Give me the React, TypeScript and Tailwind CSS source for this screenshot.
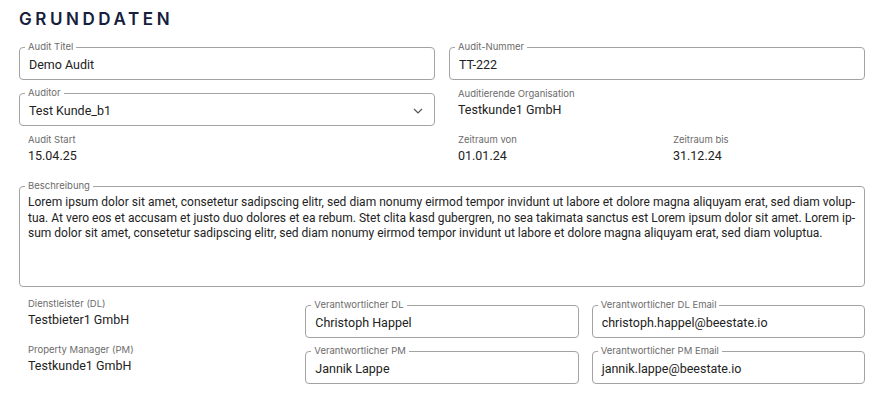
import React from "react";

const labelFont = "font-['Inter','Noto_Sans',sans-serif]";
const valueFont = "font-['Roboto','Liberation_Sans',sans-serif]";

function OutlinedField({ label, value, select }: { label: string; value: string; select?: boolean }) {
  return (
    <div className="relative h-[33px] rounded-[4px] border border-[#a3a3a3] flex items-center pl-[9px] pr-[10px] pt-[3px]">
      <span className={`absolute -top-[7px] left-[5px] bg-white px-[3px] text-[9.5px] leading-[12px] text-[#6b6b6b] ${labelFont}`}>
        {label}
      </span>
      <span className={`flex-1 text-[12.5px] text-[#222] ${valueFont}`}>{value}</span>
      {select && (
        <svg width="10" height="6" viewBox="0 0 10 6" className="mr-[1px]">
          <path d="M1 1l4 4 4-4" fill="none" stroke="#555" strokeWidth="1.2" />
        </svg>
      )}
    </div>
  );
}

function StaticField({ label, value, shift = "-mt-[6px]" }: { label: string; value: string; shift?: string }) {
  return (
    <div className={`pl-[9px] ${shift}`}>
      <div className={`text-[9.5px] leading-[12px] text-[#6b6b6b] ${labelFont}`}>{label}</div>
      <div className={`mt-[2px] text-[12.5px] leading-[16px] text-[#222] ${valueFont}`}>{value}</div>
    </div>
  );
}

export default function App() {
  return (
    <div className="w-[889px] h-[400px] bg-white pl-[19px] pr-[24px] pt-[8px]">
      <h1 className={`text-[17px] leading-[22px] font-semibold tracking-[0.21em] text-[#15203d] ${labelFont}`}>
        GRUNDDATEN
      </h1>

      <div className="mt-[17px] grid grid-cols-2 gap-x-[14px] gap-y-[13px]">
        <OutlinedField label="Audit Titel" value="Demo Audit" />
        <OutlinedField label="Audit-Nummer" value="TT-222" />
        <div className="h-[34px]">
          <OutlinedField label="Auditor" value="Test Kunde_b1" select />
        </div>
        <StaticField label="Auditierende Organisation" value="Testkunde1 GmbH" shift="-mt-[5px]" />
      </div>

      <div className="mt-[13px] grid grid-cols-2 gap-x-[14px]">
        <StaticField label="Audit Start" value="15.04.25" />
        <div className="grid grid-cols-2 gap-x-[14px]">
          <StaticField label="Zeitraum von" value="01.01.24" />
          <StaticField label="Zeitraum bis" value="31.12.24" />
        </div>
      </div>

      <div className="relative mt-[22px] h-[101px] rounded-[4px] border border-[#a3a3a3] pl-[8px] pr-[9px] pt-[8px]">
        <span className={`absolute -top-[7px] left-[5px] bg-white px-[3px] text-[9.5px] leading-[12px] text-[#6b6b6b] ${labelFont}`}>
          Beschreibung
        </span>
        <p className={`text-[12px] leading-[15.5px] text-[#222] text-justify ${valueFont}`}>
          Lorem ipsum dolor sit amet, consetetur sadipscing elitr, sed diam nonumy eirmod tempor invidunt ut labore et
          dolore magna aliquyam erat, sed diam volup{"\u00AD"}tua. At vero eos et accusam et justo duo dolores et ea
          rebum. Stet clita kasd gubergren, no sea takimata sanctus est Lorem ipsum dolor sit amet. Lorem ip{"\u00AD"}sum
          dolor sit amet, consetetur sadipscing elitr, sed diam nonumy eirmod tempor invidunt ut labore et dolore magna
          aliquyam erat, sed diam voluptua.
        </p>
      </div>

      <div className="mt-[18px] grid grid-cols-3 gap-x-[13px] gap-y-[13px]">
        <StaticField label="Dienstleister (DL)" value="Testbieter1 GmbH" shift="-mt-[7px]" />
        <OutlinedField label="Verantwortlicher DL" value="Christoph Happel" />
        <OutlinedField label="Verantwortlicher DL Email" value="christoph.happel@beestate.io" />
        <StaticField label="Property Manager (PM)" value="Testkunde1 GmbH" shift="-mt-[7px]" />
        <OutlinedField label="Verantwortlicher PM" value="Jannik Lappe" />
        <OutlinedField label="Verantwortlicher PM Email" value="jannik.lappe@beestate.io" />
      </div>
    </div>
  );
}
